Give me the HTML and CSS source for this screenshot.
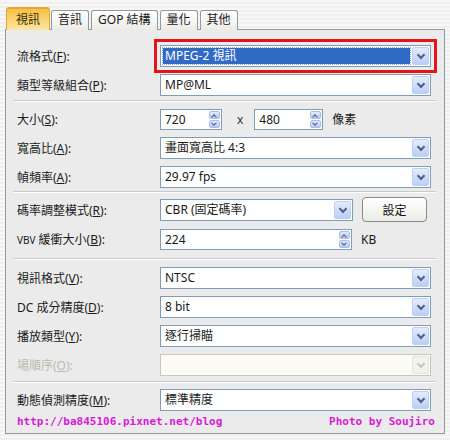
FILE: index.html
```html
<!DOCTYPE html>
<html lang="zh-Hant">
<head>
    <meta charset="UTF-8">
    <meta name="viewport" content="width=device-width, initial-scale=1.0">
    <title>MPEG-2 視訊設定</title>
    <link rel="stylesheet" href="styles.css">
</head>
<body>
    <div class="dialog">
        <div class="tabs">
            <span class="tab active">視訊</span>
            <span class="tab">音訊</span>
            <span class="tab">GOP 結構</span>
            <span class="tab">量化</span>
            <span class="tab">其他</span>
        </div>
        <div class="panel">
            <div class="group">
                <label>流格式(<u>F</u>):</label>
                <div class="combo marked"><span class="value selected">MPEG-2 視訊</span><span class="drop"></span></div>
                <label>類型等級組合(<u>P</u>):</label>
                <div class="combo"><span class="value">MP@ML</span><span class="drop"></span></div>
            </div>
            <div class="sep"></div>
            <div class="group">
                <label>大小(<u>S</u>):</label>
                <div class="inline">
                    <div class="spin w62"><span class="num">720</span><span class="arrows"><i class="up"></i><i class="down"></i></span></div>
                    <span class="times">x</span>
                    <div class="spin w69"><span class="num">480</span><span class="arrows"><i class="up"></i><i class="down"></i></span></div>
                    <span class="unit">像素</span>
                </div>
                <label>寬高比(<u>A</u>):</label>
                <div class="combo"><span class="value">畫面寬高比 4:3</span><span class="drop"></span></div>
                <label>幀頻率(<u>A</u>):</label>
                <div class="combo"><span class="value">29.97 fps</span><span class="drop"></span></div>
            </div>
            <div class="sep sep-tight"></div>
            <div class="group">
                <label>碼率調整模式(<u>R</u>):</label>
                <div class="inline">
                    <div class="combo w193"><span class="value">CBR (固定碼率)</span><span class="drop"></span></div>
                    <button class="btn">設定</button>
                </div>
                <label><span class="small">VBV</span> 緩衝大小(<u>B</u>):</label>
                <div class="inline">
                    <div class="spin w192"><span class="num">224</span><span class="arrows"><i class="up"></i><i class="down"></i></span></div>
                    <span class="unit">KB</span>
                </div>
            </div>
            <div class="sep sep-wide"></div>
            <div class="group">
                <label>視訊格式(<u>V</u>):</label>
                <div class="combo"><span class="value">NTSC</span><span class="drop"></span></div>
                <label>DC 成分精度(<u>D</u>):</label>
                <div class="combo"><span class="value">8 bit</span><span class="drop"></span></div>
                <label>播放類型(<u>Y</u>):</label>
                <div class="combo"><span class="value">逐行掃瞄</span><span class="drop"></span></div>
                <label class="disabled">場順序(<u>O</u>):</label>
                <div class="combo disabled"><span class="value"></span><span class="drop"></span></div>
            </div>
            <div class="sep sep-last"></div>
            <div class="group">
                <label>動態偵測精度(<u>M</u>):</label>
                <div class="combo"><span class="value">標準精度</span><span class="drop"></span></div>
            </div>
            <div class="footer">
                <span>http://ba845106.pixnet.net/blog</span>
                <span>Photo by Soujiro</span>
            </div>
        </div>
    </div>
</body>
</html>
```

FILE: styles.css
```css
* {
    box-sizing: border-box;
}

body {
    margin: 0;
    font-family: "Noto Sans", "Noto Sans CJK TC", sans-serif;
    font-size: 12px;
    color: #1a1a1a;
    background: repeating-linear-gradient(#f7f7f7 0 2px, #efefef 2px 4px);
    height: 440px;
}

.dialog {
    width: 440px;
    margin-left: 5px;
    padding-top: 7px;
}

.tabs {
    display: flex;
    align-items: flex-end;
    height: 23px;
    padding-left: 1px;
    margin-bottom: -1px;
    position: relative;
    z-index: 1;
}

.tab {
    height: 20px;
    line-height: 18px;
    padding: 0 6px;
    margin-right: 2px;
    border: 1px solid #919b9c;
    border-bottom: none;
    border-radius: 3px 3px 0 0;
    background: linear-gradient(#ffffff, #ecebe6);
}

.tab.active {
    height: 23px;
    line-height: 21px;
    padding: 0 9px;
    margin-right: 1px;
    border-color: #d8a842;
    border-top: 2px solid #e8a534;
    background: linear-gradient(#f6c140, #fde6a6);
    color: #3a2a00;
}

.panel {
    height: 405px;
    border: 1px solid #919b9c;
    background: #ebebeb;
    padding: 15px 13px 0 7px;
}

.group {
    display: grid;
    grid-template-columns: 147px 1fr;
    grid-auto-rows: 22px;
    row-gap: 7px;
    align-items: center;
}

label {
    padding-left: 4px;
    white-space: nowrap;
}

label.disabled {
    color: #bdbab0;
}

.small {
    font-size: 10px;
}

.sep {
    height: 2px;
    border-top: 1px solid #cacaca;
    border-bottom: 1px solid #ffffff;
    margin: 4px -5px 6px 0;
}

.sep-tight {
    margin-top: 3px;
}

.sep-wide {
    margin: 8px -5px 7px 0;
}

.sep-last {
    margin: 5px -5px 6px 0;
}

.combo {
    height: 22px;
    display: flex;
    align-items: stretch;
    border: 1px solid #7f9db9;
    background: #ffffff;
    padding: 1px;
}

.combo .value {
    flex: 1;
    padding-left: 3px;
    line-height: 18px;
    white-space: nowrap;
    overflow: hidden;
}

.combo .value.selected {
    margin: 1px 2px 1px 1px;
    padding-left: 2px;
    line-height: 16px;
    background: #316ac5;
    color: #ffffff;
    outline: 1px dotted #8aa6d8;
}

.combo.marked {
    outline: 3px solid #e2141c;
    outline-offset: 3px;
}

.drop {
    width: 17px;
    position: relative;
    border: 1px solid #bccff5;
    border-radius: 2px;
    background: linear-gradient(#e4ecfd, #bccdf5);
}

.drop::after {
    content: "";
    position: absolute;
    left: 5px;
    top: 4px;
    width: 4px;
    height: 4px;
    border-right: 2px solid #4d6185;
    border-bottom: 2px solid #4d6185;
    transform: rotate(45deg);
}

.combo.disabled {
    border-color: #c9c7ba;
    background: #fbfbf4;
}

.combo.disabled .drop {
    border-color: #e4e3dc;
    background: #f2f2ee;
}

.combo.disabled .drop::after {
    border-color: #c9c7ba;
}

.inline {
    display: flex;
    align-items: center;
}

.w62 { width: 62px; }
.w69 { width: 69px; }
.w192 { width: 192px; }
.w193 { width: 193px; }

.spin {
    height: 21px;
    display: flex;
    border: 1px solid #7f9db9;
    background: #ffffff;
    padding: 1px;
}

.spin .num {
    flex: 1;
    padding-left: 3px;
    line-height: 17px;
}

.spin .arrows {
    width: 11px;
    display: flex;
    flex-direction: column;
    gap: 1px;
}

.spin i {
    flex: 1;
    position: relative;
    border: 1px solid #a9bdea;
    border-radius: 2px;
    background: linear-gradient(#e2eafc, #b6c8f2);
}

.spin i::after {
    content: "";
    position: absolute;
    left: 2px;
    width: 3px;
    height: 3px;
    border-right: 1.5px solid #4d6185;
    border-bottom: 1.5px solid #4d6185;
}

.spin i.up::after {
    top: 3px;
    transform: rotate(-135deg);
}

.spin i.down::after {
    top: 0;
    transform: rotate(45deg);
}

.times {
    margin: 0 11px 0 15px;
    color: #333;
}

.unit {
    margin-left: 9px;
}

.btn {
    height: 25px;
    width: 65px;
    margin: -2px 0 -1px 9px;
    border: 1px solid #8a8a8a;
    border-radius: 4px;
    background: linear-gradient(#ffffff, #ebebe6);
    font-family: inherit;
    font-size: 12px;
    color: #111;
    padding: 0;
}

.footer {
    display: flex;
    justify-content: space-between;
    margin: 4px -4px 0 0;
    padding-left: 4px;
    height: 14px;
    line-height: 14px;
    font-family: "DejaVu Sans Mono", monospace;
    font-weight: bold;
    font-size: 11px;
    color: #d81ad8;
}
```
